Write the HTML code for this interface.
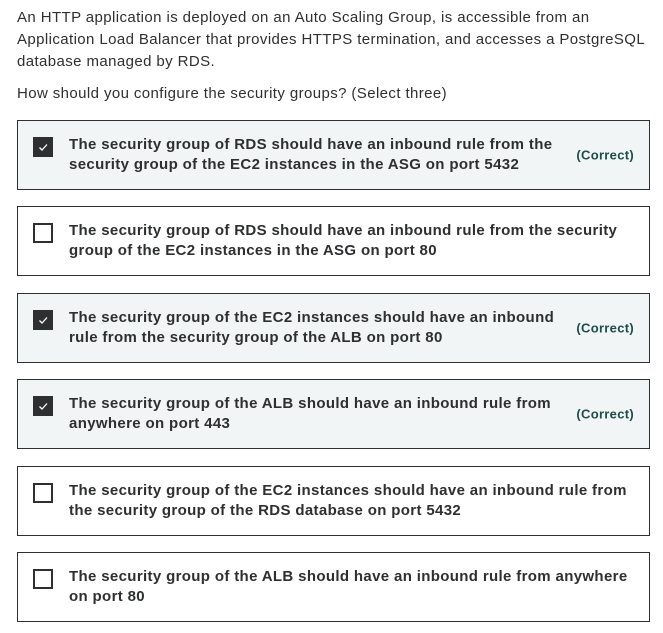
<!DOCTYPE html>
<html><head><style>
body{margin:0;background:#fff;font-family:"Liberation Sans",sans-serif;color:#2d2f31;}
.p{position:absolute;left:17px;font-size:15px;line-height:22px;width:640px;letter-spacing:0.4px;}
.box{position:absolute;left:17px;width:631px;height:68px;border:1px solid #2d2f31;background:#fff;}
.box.c{background:#f2f5f5;}
.cb{position:absolute;left:15px;top:16px;width:16px;height:16px;border:2px solid #2d2f31;background:#fff;}
.c .cb{background:#2d2f31;}
.cb svg{position:absolute;left:1px;top:1px;}
.t{position:absolute;left:51px;top:50%;transform:translateY(-50%);font-weight:bold;font-size:15px;line-height:20px;width:500px;letter-spacing:0.35px;}
.u .t{width:565px;}
.ok{position:absolute;right:15px;top:50%;transform:translateY(-50%);font-weight:bold;font-size:13px;color:#1e4d4b;letter-spacing:0.3px;}
</style></head><body>
<div class="p" style="top:7px">An HTTP application is deployed on an Auto Scaling Group, is accessible from an Application Load Balancer that provides HTTPS termination, and accesses a PostgreSQL database managed by RDS.</div>
<div class="p" style="top:83px">How should you configure the security groups? (Select three)</div>

<div class="box c" style="top:120px"><div class="cb"><svg width="14" height="14" viewBox="0 0 14 14"><path d="M3.5 7.5l2.5 2.5L11 4.5" stroke="#fff" stroke-width="1.3" fill="none"/></svg></div><div class="t">The security group of RDS should have an inbound rule from the security group of the EC2 instances in the ASG on port 5432</div><div class="ok">(Correct)</div></div>

<div class="box u" style="top:206px"><div class="cb"></div><div class="t">The security group of RDS should have an inbound rule from the security group of the EC2 instances in the ASG on port 80</div></div>

<div class="box c" style="top:293px"><div class="cb"><svg width="14" height="14" viewBox="0 0 14 14"><path d="M3.5 7.5l2.5 2.5L11 4.5" stroke="#fff" stroke-width="1.3" fill="none"/></svg></div><div class="t">The security group of the EC2 instances should have an inbound rule from the security group of the ALB on port 80</div><div class="ok">(Correct)</div></div>

<div class="box c" style="top:379px"><div class="cb"><svg width="14" height="14" viewBox="0 0 14 14"><path d="M3.5 7.5l2.5 2.5L11 4.5" stroke="#fff" stroke-width="1.3" fill="none"/></svg></div><div class="t">The security group of the ALB should have an inbound rule from anywhere on port 443</div><div class="ok">(Correct)</div></div>

<div class="box u" style="top:466px"><div class="cb"></div><div class="t">The security group of the EC2 instances should have an inbound rule from the security group of the RDS database on port 5432</div></div>

<div class="box u" style="top:552px"><div class="cb"></div><div class="t">The security group of the ALB should have an inbound rule from anywhere on port 80</div></div>
</body></html>
